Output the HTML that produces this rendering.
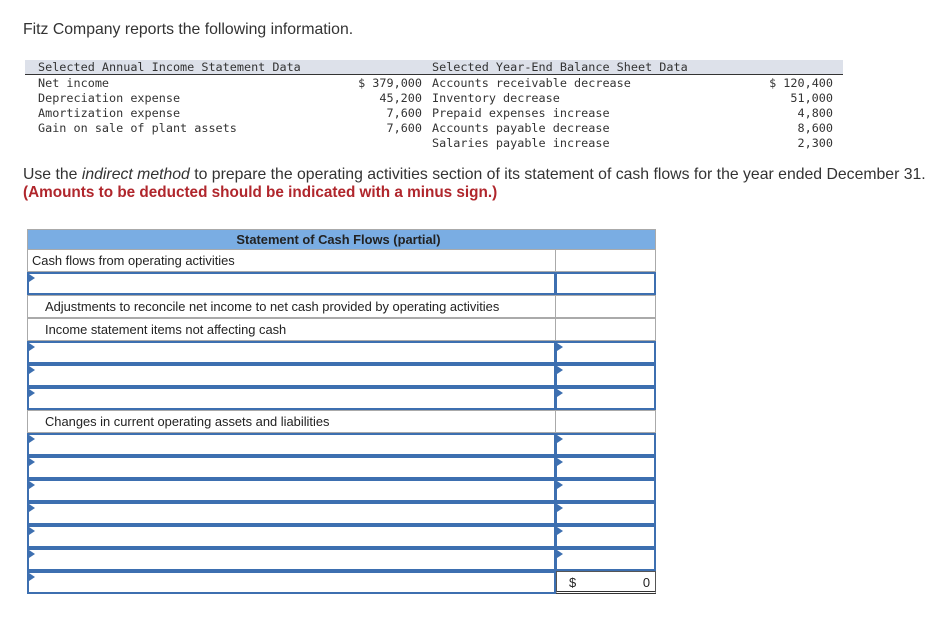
<!DOCTYPE html><html><head><style>
body{margin:0;width:934px;height:636px;background:#fff;position:relative;font-family:"Liberation Sans",Arial,sans-serif;color:#333;overflow:hidden}
.a{position:absolute;white-space:nowrap}
.m{font-family:"DejaVu Sans Mono","Liberation Mono",monospace;font-size:11.8px;color:#333}
.r{text-align:right}
.c{position:absolute;box-sizing:border-box;font-size:12.9px;color:#222;line-height:21px;padding-left:4px;white-space:nowrap}
.g{border:1px solid #aaa}
.b{border:2px solid #3d6fb0}
.arr{position:absolute;left:0;top:0;width:0;height:0;border-top:4px solid transparent;border-bottom:4px solid transparent;border-left:6px solid #3d6fb0}
</style></head><body>
<div class="a" style="left:23px;top:21px;font-size:15.8px">Fitz Company reports the following information.</div>
<div class="a" style="left:25px;top:60px;width:818px;height:14px;background:#dde1ea;border-bottom:1px solid #333"></div>
<div class="a m" style="left:38px;top:60px">Selected Annual Income Statement Data</div>
<div class="a m" style="left:432px;top:60px">Selected Year-End Balance Sheet Data</div>
<div class="a m" style="left:38px;top:76px;line-height:15px">Net income<br>Depreciation expense<br>Amortization expense<br>Gain on sale of plant assets</div>
<div class="a m r" style="left:322px;width:100px;top:76px;line-height:15px">$ 379,000<br>45,200<br>7,600<br>7,600</div>
<div class="a m" style="left:432px;top:76px;line-height:15px">Accounts receivable decrease<br>Inventory decrease<br>Prepaid expenses increase<br>Accounts payable decrease<br>Salaries payable increase</div>
<div class="a m r" style="left:733px;width:100px;top:76px;line-height:15px">$ 120,400<br>51,000<br>4,800<br>8,600<br>2,300</div>
<div class="a" style="left:23px;top:166px;font-size:15.8px">Use the <i>indirect method</i> to prepare the operating activities section of its statement of cash flows for the year ended December 31.</div>
<div class="a" style="left:23px;top:184px;font-size:15.3px;font-weight:bold;color:#b0262c">(Amounts to be deducted should be indicated with a minus sign.)</div>
<div class="c g" style="left:27px;top:229px;width:629px;height:21px;background:#7aade3;text-align:center;font-weight:bold;line-height:19px;padding-left:0;padding-right:6px">Statement of Cash Flows (partial)</div>
<div id="t"></div>
<script>
var rows=[[249,'g','Cash flows from operating activities',0],[272,'b','',0],[295,'g','Adjustments to reconcile net income to net cash provided by operating activities',1],[318,'g','Income statement items not affecting cash',1],[341,'b','',0],[364,'b','',0],[387,'b','',0],[410,'g','Changes in current operating assets and liabilities',1],[433,'b','',0],[456,'b','',0],[479,'b','',0],[502,'b','',0],[525,'b','',0],[548,'b','',0],[571,'b','',0]];
var h='';rows.forEach(function(r,i){var y=r[0];
h+='<div class="c '+r[1]+'" style="left:27px;top:'+y+'px;width:529px;height:23px;'+(r[3]?'padding-left:17px':'')+'">'+(r[1]=='b'?'<div class="arr"></div>':'')+r[2]+'</div>';
if(i==14){h+='<div class="c" style="left:556px;top:'+y+'px;width:100px;height:23px;border:1px solid #555;border-bottom:3px double #333"><span style="position:absolute;left:12px">$</span><span style="position:absolute;right:5px">0</span></div>';}
else h+='<div class="c '+r[1]+'" style="left:555px;top:'+y+'px;width:101px;height:23px">'+(r[1]=='b'&&i>=4?'<div class="arr"></div>':'')+'</div>';});
document.getElementById('t').innerHTML=h;
</script>
</body></html>
